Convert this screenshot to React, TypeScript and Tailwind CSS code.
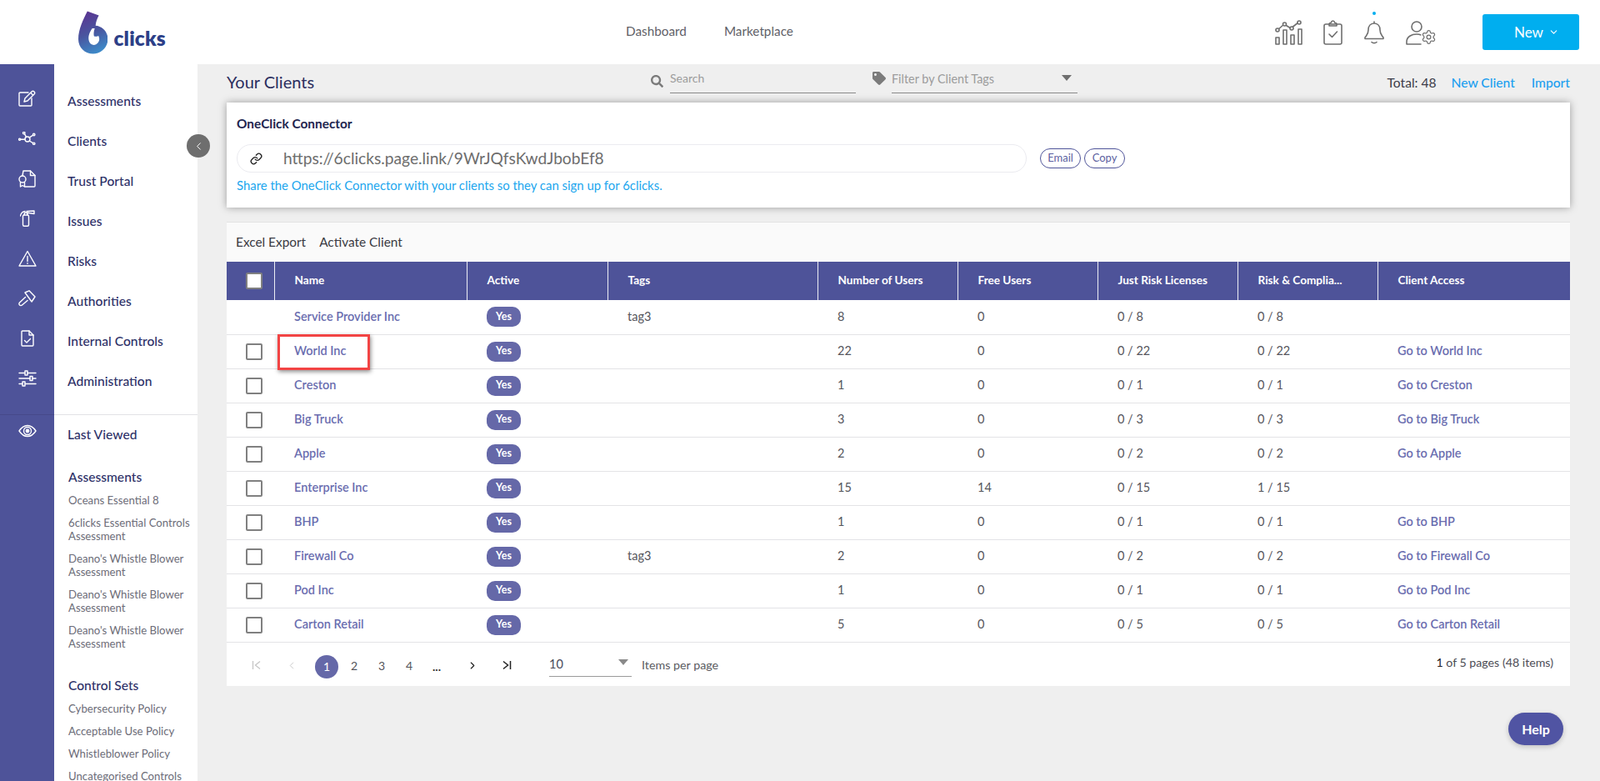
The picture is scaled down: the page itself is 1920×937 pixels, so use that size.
import React from "react";
import { FaSearch, FaTag } from "react-icons/fa";
import { Link as LinkIcon, ChevronLeft, ChevronRight, ChevronDown, Settings } from "lucide-react";

const S = { fill: "none", stroke: "currentColor", strokeWidth: 1.4, strokeLinecap: "round", strokeLinejoin: "round" } as const;

const railIcons = [
  <svg width="22" height="20" viewBox="0 0 22 20" {...S}><path d="M16 10v8a1 1 0 0 1-1 1H2a1 1 0 0 1-1-1V4a1 1 0 0 1 1-1h10" /><path d="M7 14l1-4 8-8a1.500 1.500 0 0 1 3 3l-8 8z" /><path d="M15 3.500l2.500 2.500" /></svg>,
  <svg width="21" height="16" viewBox="0 0 21 16" {...S}><circle cx="11" cy="9" r="3" /><circle cx="6.700" cy="1.500" r="1.200" /><circle cx="18.700" cy="3.500" r="1.200" /><circle cx="1.700" cy="9.300" r="1.100" /><circle cx="18.700" cy="14.300" r="1.200" /><path d="M7.500 2.600l2 3.800M17.700 4.200l-4.700 3M2.900 9.200H8M13.300 11l4.300 2.600" /></svg>,
  <svg width="21" height="21" viewBox="0 0 21 21" {...S}><path d="M5 6.500L6 1h8.500L20 6.500V19a1 1 0 0 1-1 1H8" /><path d="M14.500 1v5.500H20" /><circle cx="5" cy="11" r="4" /><path d="M2.500 14.500V20L5 18.500 7.500 20v-5.500" /></svg>,
  <svg width="18" height="20" viewBox="0 0 18 20" {...S}><rect x="3.500" y="6" width="7" height="13.300" rx="1.500" /><path d="M5 6c0-2 1-3 2-3s2 1 2 3M8 1.500L17 1v3.500L8 3M0.500 7C1 4 3 2 6 1.500" /></svg>,
  <svg width="22" height="20" viewBox="0 0 22 20" {...S}><path d="M11 1.500L1 19h20z" /><path d="M11 7.500v6M11 15.800v.4" /></svg>,
  <svg width="21" height="20" viewBox="0 0 21 20" {...S}><path d="M8 3L13 .8 20 8l-4 6zM8.500 8.500L1.500 15a2 2 0 0 0 3 3l6.500-5.500" /></svg>,
  <svg width="16" height="20" viewBox="0 0 16 20" {...S}><path d="M2 1h8l5 5v12a1 1 0 0 1-1 1H2a1 1 0 0 1-1-1V2a1 1 0 0 1 1-1z" /><path d="M10 1v5h5M4.500 12.500l2.500 2.500 4.500-4.500" /></svg>,
  <svg width="22" height="20" viewBox="0 0 22 20" {...S}><path d="M1 3.500h7M11 3.500h10M1 10h13M17 10h4M1 16.500h4M8 16.500h13" /><rect x="8" y="1" width="3" height="5" /><rect x="14" y="7.500" width="3" height="5" /><rect x="5" y="14" width="3" height="5" /></svg>,
];

const navItems = ["Assessments", "Clients", "Trust Portal", "Issues", "Risks", "Authorities", "Internal Controls", "Administration"];

const rows = [
  { name: "Service Provider Inc", tags: "tag3", users: "8", free: "0", risk: "0 / 8", comp: "0 / 8", access: "", noCheck: true },
  { name: "World Inc", tags: "", users: "22", free: "0", risk: "0 / 22", comp: "0 / 22", access: "Go to World Inc", mark: true },
  { name: "Creston", tags: "", users: "1", free: "0", risk: "0 / 1", comp: "0 / 1", access: "Go to Creston" },
  { name: "Big Truck", tags: "", users: "3", free: "0", risk: "0 / 3", comp: "0 / 3", access: "Go to Big Truck" },
  { name: "Apple", tags: "", users: "2", free: "0", risk: "0 / 2", comp: "0 / 2", access: "Go to Apple" },
  { name: "Enterprise Inc", tags: "", users: "15", free: "14", risk: "0 / 15", comp: "1 / 15", access: "" },
  { name: "BHP", tags: "", users: "1", free: "0", risk: "0 / 1", comp: "0 / 1", access: "Go to BHP" },
  { name: "Firewall Co", tags: "tag3", users: "2", free: "0", risk: "0 / 2", comp: "0 / 2", access: "Go to Firewall Co" },
  { name: "Pod Inc", tags: "", users: "1", free: "0", risk: "0 / 1", comp: "0 / 1", access: "Go to Pod Inc" },
  { name: "Carton Retail", tags: "", users: "5", free: "0", risk: "0 / 5", comp: "0 / 5", access: "Go to Carton Retail" },
];

const heads = ["Name", "Active", "Tags", "Number of Users", "Free Users", "Just Risk Licenses", "Risk & Complia...", "Client Access"];

function Logo() {
  return (
    <div className="flex items-end w-[105px] h-[52px] gap-[7px]">
      <svg width="36" height="52" viewBox="0 0 36 52">
        <defs>
          <linearGradient id="lg" x1="0.3" y1="0" x2="0.6" y2="1">
            <stop offset="0" stopColor="#5a3592" />
            <stop offset="0.5" stopColor="#49559f" />
            <stop offset="1" stopColor="#3d8cca" />
          </linearGradient>
        </defs>
        <path d="M11 0L25 5.300C23 9 21.500 13 21 17.500C29 18 36 25 36 34C36 44 28 52 18 52C8 52 0 44 0 34C0 22 6 10 11 0z" fill="url(#lg)" />
        <path d="M17 21C13.500 26 11.500 31 13 36.500C14.500 42 21 42.500 24 38.500C26.500 35 25.500 32 24.500 30C22 31 20 31.500 19 30C18.500 27 19 24 20 21z" fill="#fff" />
      </svg>
      <span className="text-[24.500px] leading-[28px] font-extrabold text-[#2d3f88] [font-family:'Open_Sans',sans-serif] tracking-[0.2px] mb-[5px]">clicks</span>
    </div>
  );
}

function Header() {
  return (
    <header className="h-[77px] bg-white flex items-center shrink-0 pr-[25px]">
      <div className="w-[94px] shrink-0" />
      <Logo />
      <nav className="flex gap-[45px] ml-[552px] text-[15.300px] text-[#5f5f68] mt-[-2px]">
        <span>Dashboard</span>
        <span>Marketplace</span>
      </nav>
      <div className="ml-auto flex items-center text-[#6f6f6f]">
        <svg width="33" height="30" viewBox="0 0 33 30" {...S} strokeWidth={1.6}>
          <path d="M3 12l8-7 8 5 9-7" />
          <circle cx="3" cy="12" r="2" fill="#fff" /><circle cx="11.500" cy="5" r="2" fill="#fff" /><circle cx="20" cy="10" r="2" fill="#fff" /><circle cx="29" cy="3" r="2" fill="#fff" />
          <rect x="1" y="21" width="4" height="8" /><rect x="10" y="12" width="4" height="17" /><rect x="19" y="18" width="4" height="11" /><rect x="28" y="11" width="4" height="18" />
        </svg>
        <svg className="ml-[25px]" width="23" height="30" viewBox="0 0 23 30" {...S} strokeWidth={1.6}>
          <rect x="1" y="5" width="21" height="24" rx="2" />
          <path d="M7 5c0-1 1-1.500 2-1.500C9.500 2 10.500 1 11.500 1s2 1 2.500 2.500c1 0 2 .5 2 1.500v2H7zM7 17l3.500 3.500L16.500 14" />
        </svg>
        <div className="relative ml-[26px]">
          <span className="absolute left-[10px] top-[-11px] w-[4px] h-[4px] rounded-full bg-[#00aeef]" />
          <svg width="24" height="28" viewBox="0 0 24 28" {...S} strokeWidth={1.6}>
            <path d="M12 1v2M12 3c-4.500 0-7 3.500-7 8 0 5-2 6-4 9v1.500h22V20c-2-3-4-4-4-9 0-4.500-2.500-8-7-8zM9 25.500c1.500 1.500 4.500 1.500 6 0" />
          </svg>
        </div>
        <div className="relative ml-[26px] w-[37px] h-[30px]">
          <svg width="37" height="30" viewBox="0 0 37 30" {...S} strokeWidth={1.6}>
            <circle cx="13" cy="8" r="6" />
            <path d="M1 29v-3c0-6 6-9 12-9 2 0 4 .5 6 1.300M1 29h17" />
          </svg>
          <Settings size={19} strokeWidth={1.6} className="absolute right-0 bottom-0 bg-white rounded-full" />
        </div>
      </div>
      <button className="ml-[55px] w-[116px] h-[43px] pl-[14px] rounded-[3px] bg-[#00aeef] text-white text-[17px] flex items-center justify-center gap-[6px]">
        New <ChevronDown size={13} strokeWidth={2} />
      </button>
    </header>
  );
}

function Rail() {
  return (
    <aside className="w-[65px] shrink-0 bg-[#4e5399] flex flex-col text-white">
      <div className="pt-[17px] h-[420px] shrink-0">
        {railIcons.map((ic, i) => (
          <div key={i} className="h-[48px] flex items-center justify-center">{ic}</div>
        ))}
      </div>
      <div className="border-t border-[#46498a] pt-[8px] flex justify-center">
        <svg width="22" height="22" viewBox="0 0 22 22" {...S}>
          <path d="M1 11c3-4.500 6.500-6.500 10-6.500S18 6.500 21 11c-3 4.500-6.500 6.500-10 6.500S4 15.500 1 11z" />
          <circle cx="11" cy="11" r="4.500" />
          <circle cx="11" cy="11" r="1.700" fill="currentColor" />
        </svg>
      </div>
    </aside>
  );
}

function SubList({ title, items }: { title: string; items: string[] }) {
  return (
    <div className="pl-[17px] pr-[2px]">
      <div className="text-[15.600px] leading-[20px] font-medium text-[#2e3168]">{title}</div>
      <ul className="mt-[10px] flex flex-col gap-[11px]">
        {items.map((t, i) => (
          <li key={i} className="text-[13.200px] leading-[16px] text-[#6c6c78]">{t}</li>
        ))}
      </ul>
    </div>
  );
}

function NavPanel() {
  return (
    <aside className="relative w-[172px] shrink-0 bg-white flex flex-col">
      <div className="pt-[21px] h-[420px] shrink-0">
        {navItems.map((n) => (
          <div key={n} className="h-[48px] flex items-center pl-[16px] text-[15.600px] font-medium text-[#2e3168]">{n}</div>
        ))}
      </div>
      <div className="border-t border-[#e2e2e6] h-[48px] shrink-0 pl-[16px] flex items-center text-[15.600px] font-medium text-[#2e3168]">Last Viewed</div>
      <div className="mt-[17px] shrink-0">
        <SubList title="Assessments" items={["Oceans Essential 8", "6clicks Essential Controls Assessment", "Deano's Whistle Blower Assessment", "Deano's Whistle Blower Assessment", "Deano's Whistle Blower Assessment"]} />
      </div>
      <div className="mt-[32px] shrink-0">
        <SubList title="Control Sets" items={["Cybersecurity Policy", "Acceptable Use Policy", "Whistleblower Policy", "Uncategorised Controls"]} />
      </div>
      <button className="absolute right-[-15px] top-[84px] w-[28px] h-[28px] rounded-full bg-[#6e6e6e] text-white flex items-center justify-center">
        <ChevronLeft size={15} strokeWidth={1.600} />
      </button>
    </aside>
  );
}

function TopBar() {
  return (
    <div className="h-[46px] flex items-center shrink-0">
      <h1 className="w-[509px] text-[20px] font-normal text-[#2b2e5f] leading-[26px] shrink-0 mt-[-4px]">Your Clients</h1>
      <div className="flex items-center w-[246px] shrink-0 gap-[8px] mt-[-6px]">
        <FaSearch size={15} className="text-[#7b7b7b] shrink-0" />
        <div className="flex-1 h-[29px] border-b border-[#8a8a8a] text-[14px] leading-[21px] text-[#9c9c9c]">Search</div>
      </div>
      <div className="flex items-center w-[246px] ml-[20px] shrink-0 gap-[7px] mt-[-6px]">
        <FaTag size={16} className="text-[#7b7b7b] shrink-0 mb-[6px]" />
        <div className="flex-1 h-[29px] border-b border-[#8a8a8a] text-[14.400px] leading-[23px] text-[#9c9c9c] flex justify-between pr-[7px]">
          <span>Filter by Client Tags</span>
          <span className="w-0 h-0 mt-[7px] border-l-[6px] border-r-[6px] border-t-[7px] border-l-transparent border-r-transparent border-t-[#6f6f6f]" />
        </div>
      </div>
      <div className="ml-auto flex items-center text-[15.600px]">
        <span className="text-[#3c3c48]">Total: 48</span>
        <span className="ml-[18px] text-[#1d9ff0] font-medium">New Client</span>
        <span className="ml-[20px] text-[#1d9ff0] font-medium">Import</span>
      </div>
    </div>
  );
}

function Connector() {
  return (
    <section className="h-[126px] bg-white shadow-[0_0_9px_rgba(0,0,0,0.35)] px-[12px] pt-[16px] shrink-0">
      <div className="text-[15.400px] leading-[18px] font-bold text-[#22254f]">OneClick Connector</div>
      <div className="mt-[16px] flex items-center">
        <div className="w-[948px] h-[34px] rounded-full border border-[#ebebf0] flex items-center">
          <div className="w-[45px] flex justify-center text-[#222]"><LinkIcon size={15} strokeWidth={2.200} /></div>
          <span className="ml-[10px] text-[19.200px] text-[#6d6d6d]">https://6clicks.page.link/9WrJQfsKwdJbobEf8</span>
        </div>
        <button className="ml-[16px] w-[49px] h-[24px] rounded-full border border-[#4e5399] text-[13px] text-[#5c5f9f]">Email</button>
        <button className="ml-[4px] w-[49px] h-[24px] rounded-full border border-[#4e5399] text-[13px] text-[#5c5f9f]">Copy</button>
      </div>
      <div className="mt-[6px] text-[14.900px] leading-[18px] text-[#1ba6ee]">Share the OneClick Connector with your clients so they can sign up for 6clicks.</div>
    </section>
  );
}

function Box() {
  return <span className="block w-[20px] h-[20px] rounded-[2px] border-2 border-[#808080] bg-white" />;
}

function Table() {
  return (
    <table className="w-full table-fixed border-collapse text-[14.500px]">
      <colgroup>
        <col className="w-[57px]" /><col className="w-[231px]" /><col className="w-[169px]" /><col className="w-[252px]" />
        <col className="w-[168px]" /><col className="w-[168px]" /><col className="w-[168px]" /><col className="w-[168px]" /><col />
      </colgroup>
      <thead>
        <tr className="h-[46px] bg-[#4e5399] text-white">
          <th className="p-0"><div className="flex pl-[23px]"><Box /></div></th>
          {heads.map((h) => (
            <th key={h} className="p-0 pb-[2px] text-left font-bold text-[13.600px] border-l border-white/90 pl-[24px]">{h}</th>
          ))}
        </tr>
      </thead>
      <tbody>
        {rows.map((r) => (
          <tr key={r.name} className="h-[41px] border-b border-[#e3e3e6] bg-white">
            <td className="p-0"><div className="flex pl-[23px]">{!r.noCheck && <Box />}</div></td>
            <td className="p-0 pb-[1px] pl-[24px] font-semibold text-[#6a6daf] relative">
              {r.name}
              {r.mark && <span className="absolute left-[4px] top-[-1px] w-[111px] h-[43px] border-[3px] border-[#f24444] shadow-[1px_2px_5px_rgba(0,0,0,0.45)]" />}
            </td>
            <td className="p-0 pl-[24px]">
              <span className="inline-flex items-center justify-center w-[41px] h-[24px] rounded-[10px] bg-[#6568a8] text-white text-[12.500px] font-bold align-middle">Yes</span>
            </td>
            <td className="p-0 pb-[1px] pl-[24px] text-[#55555c]">{r.tags}</td>
            <td className="p-0 pb-[1px] pl-[24px] text-[#55555c]">{r.users}</td>
            <td className="p-0 pb-[1px] pl-[24px] text-[#55555c]">{r.free}</td>
            <td className="p-0 pb-[1px] pl-[24px] text-[#55555c]">{r.risk}</td>
            <td className="p-0 pb-[1px] pl-[24px] text-[#55555c]">{r.comp}</td>
            <td className="p-0 pb-[1px] pl-[24px] font-semibold text-[#6a6daf]">{r.access}</td>
          </tr>
        ))}
      </tbody>
    </table>
  );
}

function FirstIcon() {
  return <svg width="12" height="12" viewBox="0 0 12 12" fill="none" stroke="currentColor" strokeWidth="1.400"><path d="M1.500 1v10M10 1.500L4.500 6l5.500 4.500" /></svg>;
}
function LastIcon() {
  return <svg width="12" height="12" viewBox="0 0 12 12" fill="none" stroke="currentColor" strokeWidth="1.500"><path d="M10.500 1v10M2 1.500L7.500 6 2 10.500" /></svg>;
}

function Pager() {
  return (
    <div className="h-[52px] bg-white flex items-center text-[14px] text-[#55555c]">
      <div className="ml-[26px] mt-[3px] w-[20px] flex justify-center text-[#c8c8c8]"><FirstIcon /></div>
      <div className="ml-[25px] mt-[3px] w-[14px] flex justify-center text-[#c8c8c8]"><ChevronLeft size={15} strokeWidth={1.600} /></div>
      <div className="ml-[21px] mt-[6px] w-[28px] h-[28px] rounded-full bg-[#6568a8] text-white flex items-center justify-center">1</div>
      <div className="ml-[5px] mt-[3px] w-[28px] text-center">2</div>
      <div className="ml-[5px] mt-[3px] w-[28px] text-center">3</div>
      <div className="ml-[5px] mt-[3px] w-[28px] text-center">4</div>
      <div className="ml-[5px] mt-[5px] w-[28px] text-center font-bold text-[#333]">...</div>
      <div className="ml-[22px] mt-[3px] w-[14px] flex justify-center text-[#222]"><ChevronRight size={15} strokeWidth={2} /></div>
      <div className="ml-[24px] mt-[3px] w-[20px] flex justify-center text-[#222]"><LastIcon /></div>
      <div className="ml-[41px] w-[99px] h-[30px] border-b border-[#9a9a9a] flex items-center justify-between pr-[4px] pt-[2px] text-[#4a4a5a] text-[14.500px]">
        <span>10</span>
        <span className="w-0 h-0 mb-[6px] border-l-[6px] border-r-[6px] border-t-[7px] border-l-transparent border-r-transparent border-t-[#8a8a8a]" />
      </div>
      <div className="ml-[12px] mt-[2px] text-[14.300px] text-[#5a5a60]">Items per page</div>
      <div className="ml-auto mr-[20px] mt-[-4px] text-[14.200px] text-[#4c4c55]"><span className="text-[#222]">1</span> of 5 pages (48 items)</div>
    </div>
  );
}

export default function App() {
  return (
    <div className="w-full h-[937px] overflow-hidden flex flex-col bg-[#efefef] [font-family:Lato,sans-serif]">
      <Header />
      <div className="flex flex-1 min-h-0">
        <Rail />
        <NavPanel />
        <main className="relative flex-1 min-w-0 pl-[35px] pr-[36px] flex flex-col">
          <TopBar />
          <Connector />
          <div className="mt-[17px] h-[48px] bg-[#fafafa] border-t border-[#e3e3e3] flex items-center pl-[11px] gap-[16px] text-[15.400px] text-[#3a3a42] shrink-0">
            <span>Excel Export</span><span>Activate Client</span>
          </div>
          <Table />
          <Pager />
          <button className="absolute right-[44px] top-[778px] w-[66px] h-[39px] rounded-full bg-[#5054a3] text-white text-[16px] font-bold shadow-[0_2px_6px_rgba(0,0,0,0.2)]">Help</button>
        </main>
      </div>
    </div>
  );
}
